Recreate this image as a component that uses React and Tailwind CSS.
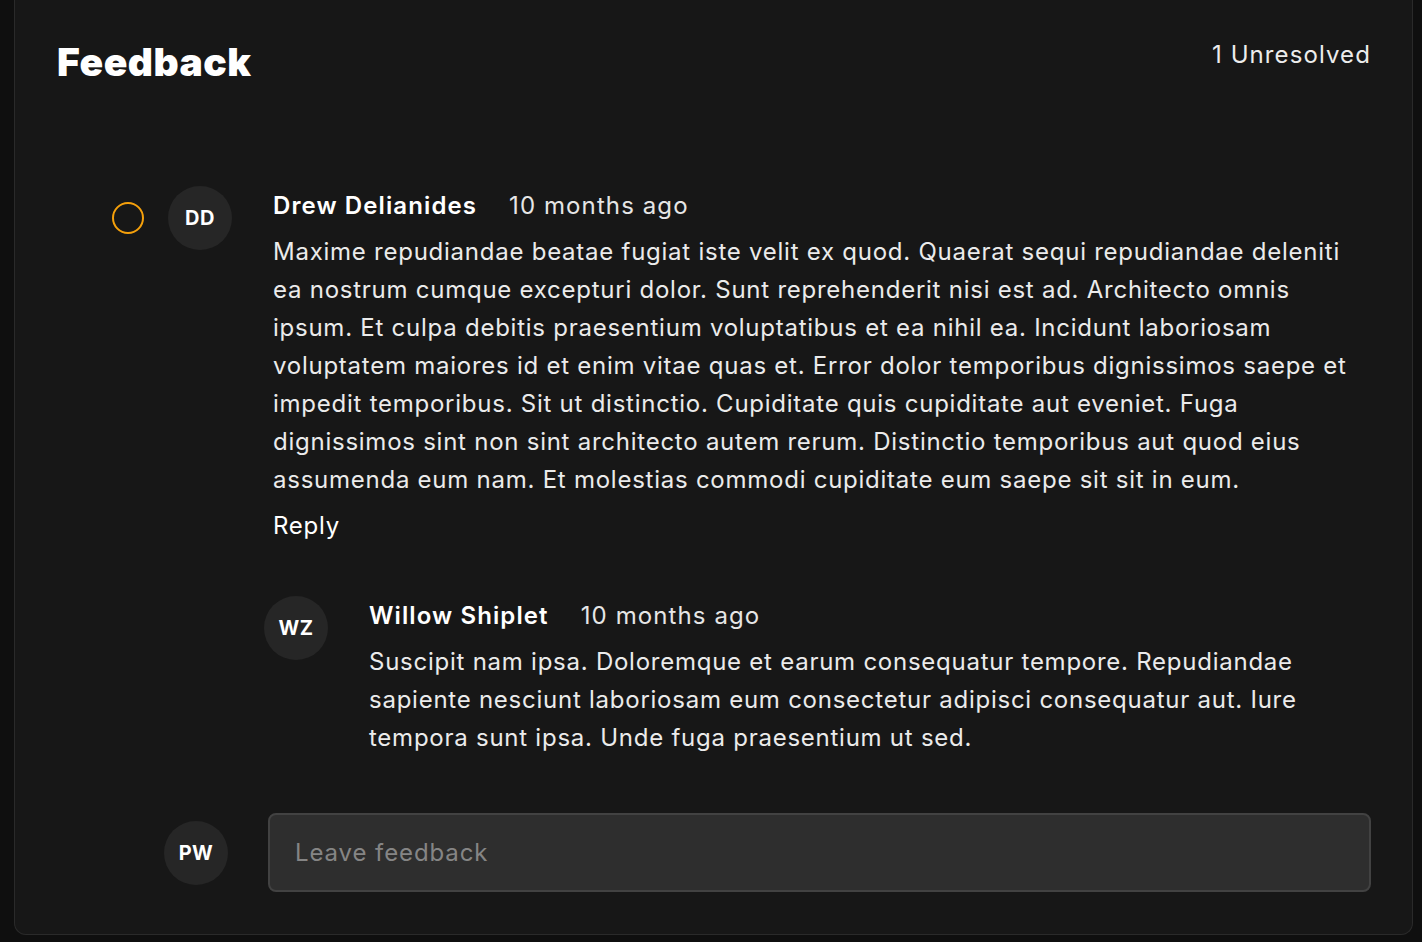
import React from "react";

const mainBody =
  "Maxime repudiandae beatae fugiat iste velit ex quod. Quaerat sequi repudiandae deleniti ea nostrum cumque excepturi dolor. Sunt reprehenderit nisi est ad. Architecto omnis ipsum. Et culpa debitis praesentium voluptatibus et ea nihil ea. Incidunt laboriosam voluptatem maiores id et enim vitae quas et. Error dolor temporibus dignissimos saepe et impedit temporibus. Sit ut distinctio. Cupiditate quis cupiditate aut eveniet. Fuga dignissimos sint non sint architecto autem rerum. Distinctio temporibus aut quod eius assumenda eum nam. Et molestias commodi cupiditate eum saepe sit sit in eum.";

const replyBody =
  "Suscipit nam ipsa. Doloremque et earum consequatur tempore. Repudiandae sapiente nesciunt laboriosam eum consectetur adipisci consequatur aut. Iure tempora sunt ipsa. Unde fuga praesentium ut sed.";

function Avatar({ initials }) {
  return (
    <div className="w-16 h-16 shrink-0 rounded-full bg-[#262626] flex items-center justify-center text-[20px] font-bold text-white tracking-[0.5px]">
      {initials}
    </div>
  );
}

function CommentHead({ name, time }) {
  return (
    <div className="flex items-center gap-8 leading-[38px] pt-1">
      <span className="text-2xl font-semibold text-white tracking-[1.1px]">{name}</span>
      <span className="text-2xl text-[#e6e6e6] tracking-[1.1px]">{time}</span>
    </div>
  );
}

export default function App() {
  return (
    <div
      className="min-h-screen bg-[#0f0f0f] pl-[14px] pr-[9px] pb-2"
      style={{ fontFamily: "Inter, 'Noto Sans', sans-serif" }}
    >
      <div className="bg-[#171717] border-x border-b border-[#2a2a2a] rounded-b-xl pl-[42px] pr-[41px] pt-9 pb-[42px] tracking-[0.75px]">
        {/* Header */}
        <div className="flex items-start justify-between">
          <h1 className="text-[39px] leading-[52px] font-black text-white tracking-[0.5px]">Feedback</h1>
          <span className="text-2xl leading-[38px] text-[#ececec] tracking-[1.1px]">1 Unresolved</span>
        </div>

        {/* Main comment */}
        <div className="flex mt-[98px]">
          <div className="ml-[55px] w-8 h-16 flex items-center shrink-0">
            <div className="w-8 h-8 rounded-full border-2 border-[#f5a00b]" />
          </div>
          <div className="ml-6">
            <Avatar initials="DD" />
          </div>
          <div className="ml-[41px] flex-1">
            <CommentHead name="Drew Delianides" time="10 months ago" />
            <p className="mt-[11px] text-2xl leading-[38px] text-[#ebebeb]">{mainBody}</p>
            <div className="mt-2 text-2xl leading-[38px] text-white">Reply</div>
          </div>
        </div>

        {/* Reply */}
        <div className="flex mt-[51px] ml-[207px]">
          <Avatar initials="WZ" />
          <div className="ml-[41px] flex-1">
            <CommentHead name="Willow Shiplet" time="10 months ago" />
            <p className="mt-[11px] text-2xl leading-[38px] text-[#ebebeb]">{replyBody}</p>
          </div>
        </div>

        {/* Input */}
        <div className="flex items-center mt-[56px] ml-[107px]">
          <Avatar initials="PW" />
          <div className="ml-10 flex-1 h-[79px] rounded-lg bg-[#2e2e2e] border-2 border-[#424242] flex items-center px-[25px]">
            <input
              className="w-full bg-transparent outline-none text-2xl text-white placeholder:text-[#858585] tracking-[0.9px]"
              placeholder="Leave feedback"
            />
          </div>
        </div>
      </div>
    </div>
  );
}
